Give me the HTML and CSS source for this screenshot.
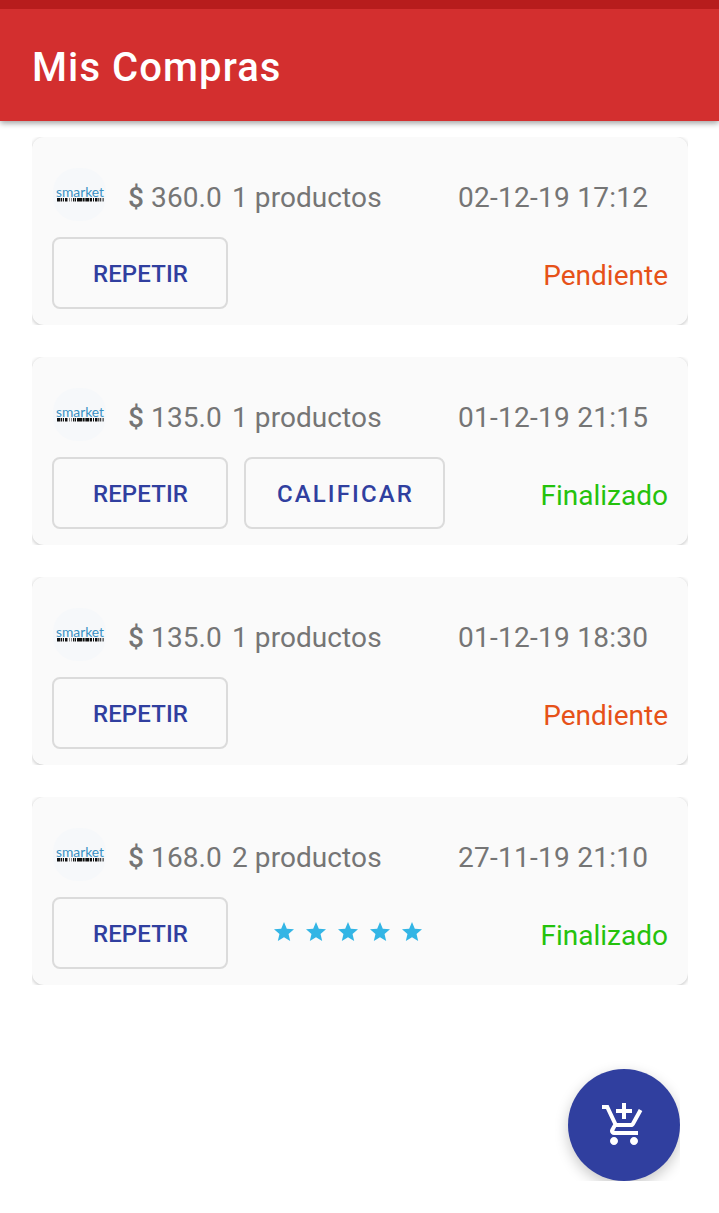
FILE: index.html
```html
<!DOCTYPE html>
<html lang="es">
<head>
<meta charset="utf-8">
<title>Mis Compras</title>
<link rel="stylesheet" href="styles.css">
</head>
<body>
<svg class="defs" width="0" height="0" aria-hidden="true">
  <symbol id="barcode" viewBox="0 0 56 54">
    <path stroke="#111" stroke-width="3.4" d="M5 31.7h3M8.6 31.7h1.6M11 31.7h1M13 31.7h2.5M21 31.7h1.4M23 31.7h1M25 31.7h5M30.6 31.7h2M33.3 31.7h4M38 31.7h2M41 31.7h1M43 31.7h2.5M46.3 31.7h1M48.2 31.7h1M50.6 31.7h1"/>
    <path stroke="#888" stroke-width="3.4" d="M17 31.7h1M19 31.7h1"/>
  </symbol>
  <symbol id="star" viewBox="0 0 24 24">
    <path d="M12 17.27 18.18 21l-1.64-7.03L22 9.24l-7.19-.61L12 2 9.19 8.63 2 9.24l5.46 4.73L5.82 21z"/>
  </symbol>
</svg>
<div class="status-bar"></div>
<header class="app-bar"><h1>Mis Compras</h1></header>
<main class="orders">
  <article class="order"><div class="card">
    <div class="summary"><svg class="logo" viewBox="0 0 56 54"><rect x="1" y="0" width="53" height="53" rx="24"/><text x="4" y="29" textLength="48" lengthAdjust="spacingAndGlyphs">smarket</text><use href="#barcode"/></svg><span class="price"><b>$</b> 360.0</span><span class="count">1 productos</span><time>02-12-19 17:12</time></div>
    <div class="actions"><button class="button repeat">REPETIR</button><span class="status pending">Pendiente</span></div>
  </div></article>
  <article class="order"><div class="card">
    <div class="summary"><svg class="logo" viewBox="0 0 56 54"><rect x="1" y="0" width="53" height="53" rx="24"/><text x="4" y="29" textLength="48" lengthAdjust="spacingAndGlyphs">smarket</text><use href="#barcode"/></svg><span class="price"><b>$</b> 135.0</span><span class="count">1 productos</span><time>01-12-19 21:15</time></div>
    <div class="actions"><button class="button repeat">REPETIR</button><button class="button rate">CALIFICAR</button><span class="status done">Finalizado</span></div>
  </div></article>
  <article class="order"><div class="card">
    <div class="summary"><svg class="logo" viewBox="0 0 56 54"><rect x="1" y="0" width="53" height="53" rx="24"/><text x="4" y="29" textLength="48" lengthAdjust="spacingAndGlyphs">smarket</text><use href="#barcode"/></svg><span class="price"><b>$</b> 135.0</span><span class="count">1 productos</span><time>01-12-19 18:30</time></div>
    <div class="actions"><button class="button repeat">REPETIR</button><span class="status pending">Pendiente</span></div>
  </div></article>
  <article class="order"><div class="card">
    <div class="summary"><svg class="logo" viewBox="0 0 56 54"><rect x="1" y="0" width="53" height="53" rx="24"/><text x="4" y="29" textLength="48" lengthAdjust="spacingAndGlyphs">smarket</text><use href="#barcode"/></svg><span class="price"><b>$</b> 168.0</span><span class="count">2 productos</span><time>27-11-19 21:10</time></div>
    <div class="actions"><button class="button repeat">REPETIR</button>
      <div class="stars"><svg><use href="#star"/></svg><svg><use href="#star"/></svg><svg><use href="#star"/></svg><svg><use href="#star"/></svg><svg><use href="#star"/></svg></div>
      <span class="status done">Finalizado</span></div>
  </div></article>
</main>
<div class="fab-clip"><button class="fab" aria-label="Agregar compra"><svg viewBox="0 0 24 24"><path d="M11 9h2V6h3V4h-3V1h-2v3H8v2h3v3zm-4 9c-1.1 0-1.99.9-1.99 2S5.9 22 7 22s2-.9 2-2-.9-2-2-2zm10 0c-1.1 0-1.99.9-1.99 2s.89 2 1.99 2 2-.9 2-2-.9-2-2-2zm-9.83-3.25l.03-.12.9-1.63h7.45c.75 0 1.41-.41 1.75-1.03l3.86-7.01L19.42 4h-.01l-1.1 2-2.76 5H8.53l-.13-.27L6.16 6l-.95-2-.94-2H1v2h2l3.6 7.59-1.35 2.45c-.16.28-.25.61-.25.96 0 1.1.9 2 2 2h12v-2H7.42c-.13 0-.25-.11-.25-.25z"/></svg></button></div>
</body>
</html>
```
FILE: styles.css
```css
* { box-sizing: border-box; }
body {
  margin: 0;
  height: 1213px;
  overflow: hidden;
  background: #fff;
  font-family: Roboto, sans-serif;
}
.defs { position: absolute; }
.status-bar { position: relative; z-index: 1; height: 9px; background: #b71c1c; }
.app-bar {
  height: 112px;
  padding: 5px 32px 0;
  display: flex;
  align-items: center;
  background: #d32f2f;
  box-shadow: 0 2px 6px rgba(0, 0, 0, .4);
}
h1 {
  margin: 0;
  color: #fff;
  font-size: 40px;
  font-weight: 500;
  letter-spacing: 1.1px;
  white-space: nowrap;
}
.orders {
  display: flex;
  flex-direction: column;
  gap: 32px;
  padding: 16px 31px 0 32px;
}
.order { height: 188px; overflow: hidden; }
.card {
  height: 188px;
  padding: 31px 20px 0;
  border-radius: 12px;
  background: #fafafa;
  box-shadow: 0 1px 4px rgba(0, 0, 0, .26);
}
.summary {
  display: grid;
  grid-template-columns: 76px 104px 226px auto;
  height: 69px;
  color: #757575;
  font-size: 28px;
  line-height: 60px;
  white-space: nowrap;
}
.price b { font-weight: 500; }
.price { letter-spacing: .1px; }
.count { letter-spacing: .08px; }
time { letter-spacing: .26px; }
.logo { width: 56px; height: 54px; }
.logo rect { fill: #f6f8fa; }
.logo text {
  font-family: Lato, sans-serif;
  font-size: 12.5px;
  font-weight: 400;
  fill: #3a91c4;
}
.actions { display: flex; height: 72px; }
.button {
  height: 72px;
  padding: 2px 0 0;
  border: 2px solid #dbdbdb;
  border-radius: 8px;
  background: #fafafa;
  color: #303f9f;
  font: 500 24px Roboto, sans-serif;
}
.repeat { width: 176px; padding-left: 1px; letter-spacing: .12px; }
.rate { width: 201px; margin-left: 16px; padding-left: 2px; letter-spacing: 2.1px; }
.status {
  margin-left: auto;
  padding-top: 6px;
  font-size: 28px;
  line-height: 66px;
}
.pending { color: #e65118; }
.done { color: #24c20c; }
.stars {
  display: flex;
  gap: 8px;
  padding: 22.5px 0 0 44px;
}
.stars svg { width: 24px; height: 24px; fill: #33b5e5; }
.fab-clip {
  position: absolute;
  left: 552px;
  top: 1053px;
  width: 128px;
  height: 128px;
  padding: 16px 0 0 16px;
  overflow: hidden;
}
.fab {
  display: flex;
  width: 112px;
  height: 112px;
  padding: 32px;
  border: 0;
  border-radius: 50%;
  background: #303f9f;
  box-shadow: 0 5px 14px rgba(0, 0, 0, .22);
}
.fab svg { width: 48px; height: 48px; fill: #fff; }
```
